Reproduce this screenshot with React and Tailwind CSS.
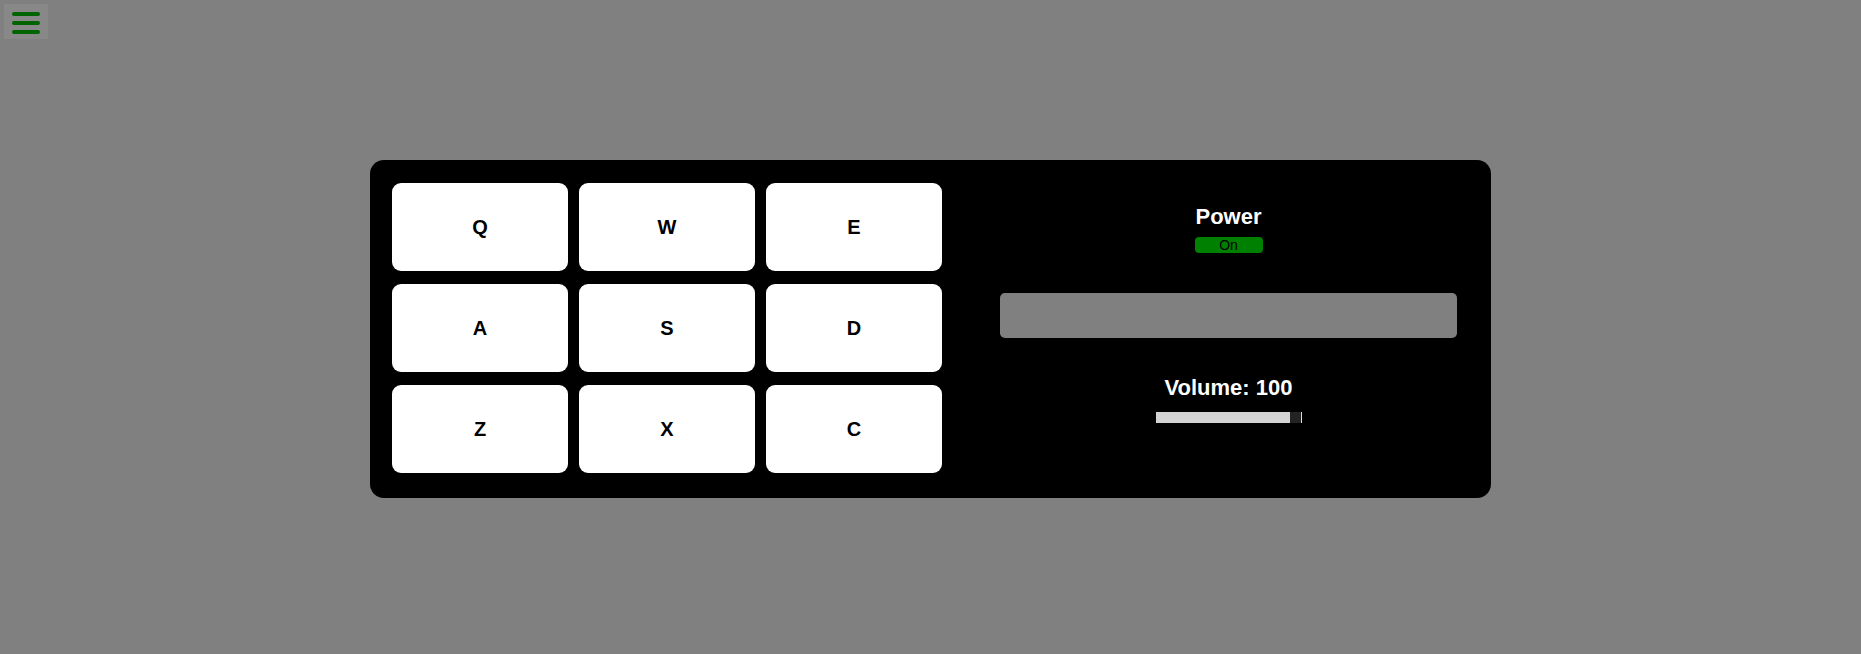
const KEYS = ["Q", "W", "E", "A", "S", "D", "Z", "X", "C"];

function MenuButton() {
  return (
    <button className="absolute left-[4px] top-[4px] flex h-[35px] w-[44px] flex-col items-center gap-[5px] bg-[#888888] pt-[8px]">
      <span className="block h-[4px] w-[28px] rounded-full bg-[#006400]" />
      <span className="block h-[4px] w-[28px] rounded-full bg-[#006400]" />
      <span className="block h-[4px] w-[28px] rounded-full bg-[#006400]" />
    </button>
  );
}

function DrumPad({ label }) {
  return (
    <div className="flex h-[88px] w-[176px] items-center justify-center rounded-[9px] bg-white text-[20px] font-bold text-black">
      {label}
    </div>
  );
}

function Controls() {
  const volume = 100;

  return (
    <div className="ml-[58px] mr-[34px] flex w-[457px] flex-col items-center pt-[21px]">
      <h3 className="text-[22px] leading-[25px] font-bold text-white">Power</h3>
      <div className="mt-[8px] h-[16px] w-[68px] rounded-[4px] bg-[#008000] text-center text-[14px] leading-[16px] text-black">
        On
      </div>

      <div className="mt-[40px] h-[45px] w-[457px] rounded-[5px] bg-[#808080]" />

      <h3 className="mt-[37px] text-[22px] leading-[25px] font-bold text-white">
        Volume: {volume}
      </h3>
      <div className="mt-[12px] flex h-[11px] w-[146px]">
        <div className="h-full w-[134px] bg-[#d3d3d3]" />
        <div className="h-full flex-1 bg-[#232323]" />
        <div className="h-full w-[1px] bg-[#dddddd]" />
      </div>
    </div>
  );
}

export default function App() {
  return (
    <div className="relative flex h-screen w-full items-center justify-center bg-[#808080] pt-1 font-['Liberation_Sans',Arial,sans-serif]">
      <MenuButton />

      <div className="flex items-start rounded-[14px] bg-black pb-[25px] pl-[22px] pt-[23px]">
        <div className="grid grid-cols-3 gap-x-[11px] gap-y-[13px]">
          {KEYS.map((k) => (
            <DrumPad key={k} label={k} />
          ))}
        </div>
        <Controls />
      </div>
    </div>
  );
}
